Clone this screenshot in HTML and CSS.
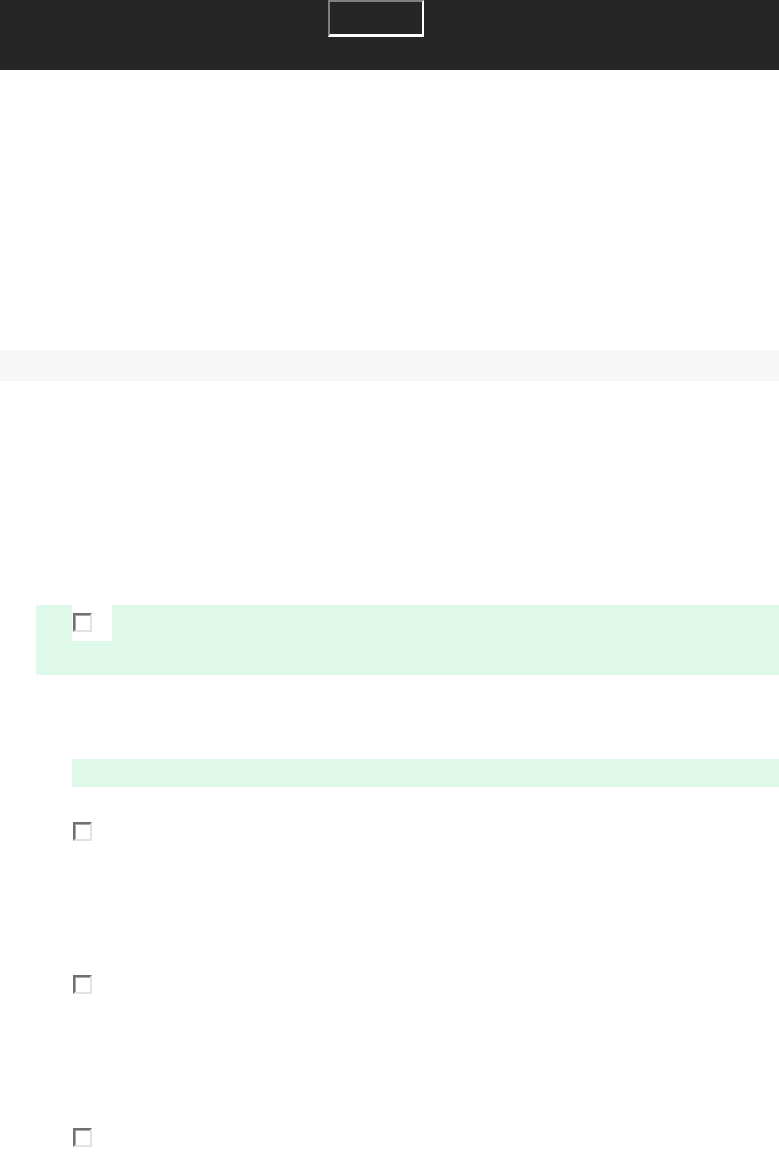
FILE: index.html
```html
<!DOCTYPE html>
<html lang="en">
<head>
<meta charset="utf-8">
<title>Tasks</title>
<link rel="stylesheet" href="styles.css">
</head>
<body>
<header class="topbar">
  <div class="search-box"></div>
</header>
<main class="page">
  <div class="toolbar-band"></div>
  <section class="task-group">
    <div class="task-row highlighted">
      <div class="check-cell"><span class="checkbox"></span></div>
    </div>
    <div class="sub-band"></div>
    <ul class="task-list">
      <li class="task-item"><span class="checkbox"></span></li>
      <li class="task-item"><span class="checkbox"></span></li>
      <li class="task-item last"><span class="checkbox"></span></li>
    </ul>
  </section>
</main>
</body>
</html>
```
FILE: styles.css
```css
html, body {
  margin: 0;
  padding: 0;
  background: #ffffff;
  font-family: "Liberation Sans", Arial, sans-serif;
}

.topbar {
  height: 70px;
  background: #262626;
  display: flex;
  align-items: flex-start;
}

.search-box {
  margin-left: 328px;
  width: 92px;
  height: 32px;
  border-style: solid;
  border-width: 2px 2px 3px 2px;
  border-color: #808080 #ffffff #ffffff #808080;
  background: #262626;
}

.page {
  display: flex;
  flex-direction: column;
}

.toolbar-band {
  margin-top: 280px;
  height: 31px;
  background: #f7f7f7;
}

.task-group {
  margin-top: 224px;
  display: flex;
  flex-direction: column;
}

.task-row.highlighted {
  margin-left: 36px;
  height: 70px;
  background: #dff9ea;
  display: flex;
  padding-left: 36px;
}

.check-cell {
  width: 39px;
  height: 28px;
  padding: 8px 0 0 1px;
  background: #ffffff;
}

.checkbox {
  display: block;
  box-sizing: border-box;
  width: 19px;
  height: 19px;
  border-style: solid;
  border-width: 2px;
  border-color: #707070 #e2e2e2 #e2e2e2 #707070;
  box-shadow: inset 1px 1px 0 #a8a8a8;
  background: #ffffff;
}

.sub-band {
  margin: 84px 0 0 72px;
  height: 28px;
  background: #dff9ea;
}

.task-list {
  list-style: none;
  margin: 35px 0 0 73px;
  padding: 0;
  display: flex;
  flex-direction: column;
}

.task-item {
  height: 153px;
}

.task-item.last {
  height: 28px;
}
```
